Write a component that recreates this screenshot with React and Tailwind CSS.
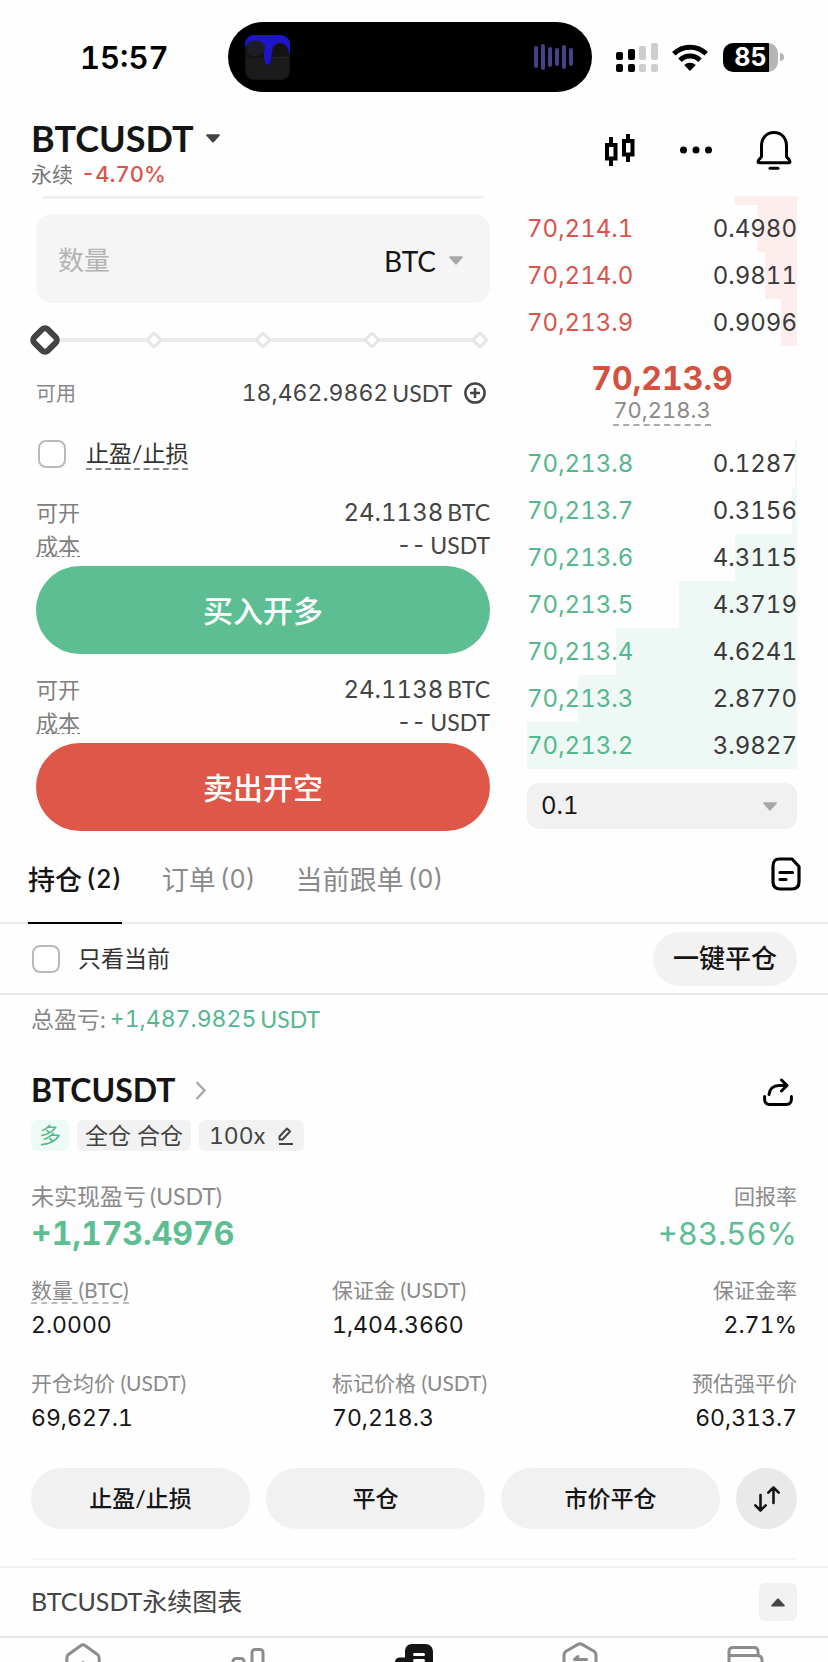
import { useState } from "react";

const asks = [
  { price: "70,214.1", amount: "0.4980", depth: 15 },
  { price: "70,214.0", amount: "0.9811", depth: 12 },
  { price: "70,213.9", amount: "0.9096", depth: 6 },
];

const bids = [
  { price: "70,213.8", amount: "0.1287", depth: 1 },
  { price: "70,213.7", amount: "0.3156", depth: 2 },
  { price: "70,213.6", amount: "4.3115", depth: 23 },
  { price: "70,213.5", amount: "4.3719", depth: 44 },
  { price: "70,213.4", amount: "4.6241", depth: 67 },
  { price: "70,213.3", amount: "2.8770", depth: 81 },
  { price: "70,213.2", amount: "3.9827", depth: 100 },
];

const stats = [
  { label: "数量", unit: "(BTC)", value: "2.0000", dashed: true },
  { label: "保证金", unit: "(USDT)", value: "1,404.3660" },
  { label: "保证金率", value: "2.71%", right: true },
  { label: "开仓均价", unit: "(USDT)", value: "69,627.1" },
  { label: "标记价格", unit: "(USDT)", value: "70,218.3" },
  { label: "预估强平价", value: "60,313.7", right: true },
];

const tabs = [
  { name: "持仓", count: 2 },
  { name: "订单", count: 0 },
  { name: "当前跟单", count: 0 },
];

function Num({ className = "", children }) {
  return <span className={`font-[Inter,sans-serif] tabular-nums ${className}`}>{children}</span>;
}

function Caret({ className = "", up = false }) {
  return (
    <svg className={className} width="14" height="9" viewBox="0 0 14 9" fill="currentColor" aria-hidden="true">
      {up ? (
        <path d="M7 .5c.4 0 .7.1 1 .5l5.500 6c.7.8.3 1.600-.8 1.600H1.300C.2 8.600-.2 7.800.5 7L6 1c.3-.4.6-.5 1-.5z" />
      ) : (
        <path d="M7 8.600c-.4 0-.7-.1-1-.5L.4 1.700C-.2 1 .1.300 1.100.300h11.800c1 0 1.300.7.7 1.400L8 8.100c-.3.4-.6.5-1 .5z" />
      )}
    </svg>
  );
}

function StatusBar() {
  return (
    <div className="flex h-[114px] items-center pl-20 pr-11">
      <div className="w-[148px] text-[31px] font-semibold leading-none text-black">
        <Num>15:57</Num>
      </div>
      <div className="flex h-[70px] w-[364px] items-center justify-between rounded-full bg-black pl-[17px] pr-[18px]">
        <svg width="45" height="45" viewBox="0 0 45 45" aria-hidden="true">
          <rect x="0" y="0" width="45" height="45" rx="9" fill="#141414" />
          <path d="M0 14V9a9 9 0 0 1 9-9h27a9 9 0 0 1 9 9v13c-1-8-4-14-10-14-5 0-8 4-8.500 12 0 5-1 10-4 10s-3.500-5-3.500-9c0-9-3-14-9-14-7 0-10 4-10 8z" fill="#1d16c8" />
          <path d="M2 14c0-5 3-8.500 8.500-8.500S20 9 20 13c0 5-5 8-9 8-5 1-9-1-9-7z" fill="#1d1d26" />
          <path d="M27 23l16-1" stroke="#2c2c2e" strokeWidth="1" />
          <path d="M1 23h18c1 4 2 7 4 7s3-3 4-7h17v13a8 8 0 0 1-8 8H9a8 8 0 0 1-8-8z" fill="#1b1b1c" />
        </svg>
        <svg width="41" height="28" viewBox="0 0 41 28" stroke="#454289" strokeWidth="4" strokeLinecap="round" aria-hidden="true">
          <path d="M3 5v18M10 3v22M17 6v16M24 7v14M31 4v20M38 7v14" />
        </svg>
      </div>
      <div className="flex flex-1 items-center justify-end">
        <svg width="42" height="30" viewBox="0 0 42 30" aria-hidden="true">
          <g fill="#000">
            <rect x="0" y="10" width="7" height="8" rx="2" />
            <rect x="12" y="7" width="7" height="11" rx="2" />
            <rect x="0" y="22" width="7" height="8" rx="2" />
            <rect x="12" y="22" width="7" height="8" rx="2" />
          </g>
          <g fill="#cdcdcd">
            <rect x="23" y="4" width="7" height="14" rx="2" />
            <rect x="35" y="1" width="7" height="17" rx="2" />
            <rect x="23" y="22" width="7" height="8" rx="2" />
            <rect x="35" y="22" width="7" height="8" rx="2" />
          </g>
        </svg>
        <svg className="ml-[14px]" width="36" height="27" viewBox="0 0 36 27" fill="none" stroke="#000" strokeWidth="5" aria-hidden="true">
          <path d="M1.800 9.800a23 23 0 0 1 32.400 0" />
          <path d="M8 16.200a14.200 14.200 0 0 1 20 0" />
          <path d="M18 27l-5.800-5.900a8.300 8.300 0 0 1 11.600 0z" fill="#000" stroke="none" />
        </svg>
        <div className="ml-[15px] flex h-[29px] w-[55px] items-center justify-center rounded-[10px] bg-linear-to-r from-black from-83% to-[#b5b5b5] to-83% text-[25px] font-bold leading-none text-white">
          <Num>85</Num>
        </div>
        <div className="ml-[2px] h-2 w-1 rounded-r-full bg-[#b5b5b5]" />
      </div>
    </div>
  );
}

function Header() {
  return (
    <header className="flex h-[82px] items-start justify-between pl-[31px] pr-9">
      <div>
        <button type="button" className="flex items-center gap-3 text-[36px] font-bold leading-[48px] text-[#151515]">
          BTCUSDT
          <Caret className="text-[#444]" />
        </button>
        <div className="flex items-center gap-2 text-[21px] leading-6 text-[#777]">
          永续
          <Num className="text-[22px] font-medium text-[#d9534a]">-4.70%</Num>
        </div>
      </div>
      <div className="flex items-center gap-11 pt-4 text-black">
        <button type="button" aria-label="K线">
          <svg width="33" height="34" viewBox="0 0 33 34" fill="none" stroke="currentColor" strokeWidth="4">
            <path d="M8 4v7M8 26v7M25 1v6M25 22v7" />
            <rect x="4" y="12" width="8.500" height="13.500" />
            <rect x="21" y="8" width="8.500" height="13.500" />
          </svg>
        </button>
        <button type="button" aria-label="更多">
          <svg width="32" height="8" viewBox="0 0 32 8" fill="currentColor">
            <circle cx="3.500" cy="4" r="3.500" />
            <circle cx="16" cy="4" r="3.500" />
            <circle cx="28.500" cy="4" r="3.500" />
          </svg>
        </button>
        <button type="button" aria-label="提醒">
          <svg width="36" height="40" viewBox="0 0 36 40" fill="none" stroke="currentColor" strokeWidth="3" strokeLinejoin="round" strokeLinecap="round">
            <path d="M5.500 16C5.500 8 10.500 2.500 18 2.500S30.500 8 30.500 16v10.500c0 1.500 3.500 2.500 3.500 5 0 .8-.5 1.200-1.300 1.200H3.300c-.8 0-1.300-.4-1.300-1.200 0-2.500 3.500-3.500 3.500-5z" />
            <path d="M14 38.200h8" />
          </svg>
        </button>
      </div>
    </header>
  );
}

function AmountSlider() {
  const [value, setValue] = useState(0);
  return (
    <div className="relative -ml-2 mt-[21px] h-8">
      <svg className="h-8 w-full" viewBox="0 0 462 32" fill="#fff" aria-hidden="true">
        <path d="M30 16h422" stroke="#ebebeb" strokeWidth="4" />
        {[126, 235, 344, 452].map((x) => (
          <rect key={x} x={x - 5} y="11" width="10" height="10" rx="2" transform={`rotate(45 ${x} 16)`} stroke="#e6e6e6" strokeWidth="3" />
        ))}
        <rect x="7.500" y="6.500" width="19" height="19" rx="4" transform="rotate(45 17 16)" stroke="#444" strokeWidth="6" />
      </svg>
      <input
        type="range"
        min="0"
        max="100"
        step="25"
        value={value}
        onChange={(e) => setValue(Number(e.target.value))}
        aria-label="仓位比例"
        className="absolute inset-0 h-full w-full cursor-pointer opacity-0"
      />
    </div>
  );
}

function Checkbox({ id }) {
  return (
    <input
      id={id}
      type="checkbox"
      className="size-7 appearance-none rounded-lg border-2 border-[#b9b9b9] bg-white checked:bg-[#444]"
    />
  );
}

function OrderSide({ label, color }) {
  return (
    <div>
      <dl className="text-[23px] leading-[33px] text-[#444]">
        <div className="flex justify-between">
          <dt className="text-[22px] text-[#808080]">可开</dt>
          <dd className="flex gap-1">
            <Num className="text-[24px]">24.1138</Num>
            <span>BTC</span>
          </dd>
        </div>
        <div className="flex justify-between">
          <dt className="text-[22px] text-[#808080] underline decoration-dashed decoration-1 underline-offset-2">成本</dt>
          <dd className="flex gap-1">
            <Num>--</Num>
            <span>USDT</span>
          </dd>
        </div>
      </dl>
      <button type="button" className={`mt-1 h-[88px] w-full rounded-full text-[30px] font-medium text-white ${color}`}>
        {label}
      </button>
    </div>
  );
}

function OrderForm() {
  return (
    <form className="w-[454px] shrink grow-0" onSubmit={(e) => e.preventDefault()}>
      <div className="mx-1.5 h-[3px] bg-[#f0f0f0]" />
      <div className="mt-[15px] flex h-[89px] items-center justify-between rounded-2xl bg-[#f5f5f5] px-[22px] pt-1">
        <input
          type="text"
          aria-label="数量"
          placeholder="数量"
          className="w-40 bg-transparent text-[26px] text-[#151515] outline-none placeholder:text-[#b3b3b3]"
        />
        <div className="relative flex items-center">
          <select aria-label="单位" className="w-[84px] appearance-none bg-transparent text-[28px] text-[#151515] outline-none">
            <option>BTC</option>
            <option>USDT</option>
          </select>
          <Caret className="pointer-events-none absolute right-[5px] text-[#a8a8a8]" />
        </div>
      </div>

      <AmountSlider />

      <div className="mt-[21px] flex h-8 items-center text-[23px] text-[#444]">
        <span className="mr-auto text-[20px] text-[#888]">可用</span>
        <span className="flex gap-1">
          <Num>18,462.9862</Num>
          <span>USDT</span>
        </span>
        <button type="button" aria-label="划转" className="ml-3 mr-1">
          <svg width="22" height="22" viewBox="0 0 22 22" fill="none" stroke="currentColor" strokeWidth="2.500">
            <circle cx="11" cy="11" r="9.600" />
            <path d="M11 6v10M6 11h10" />
          </svg>
        </button>
      </div>

      <div className="mt-[29px] flex items-center gap-5 pl-[2px]">
        <Checkbox id="tpsl" />
        <label htmlFor="tpsl" className="border-b-2 border-dashed border-[#888] text-[23px] leading-[30px] text-[#333]">
          止盈/止损
        </label>
      </div>

      <div className="mt-[26px] flex flex-col gap-[19px]">
        <OrderSide label="买入开多" color="bg-[#5dbe93]" />
        <OrderSide label="卖出开空" color="bg-[#df5748]" />
      </div>
    </form>
  );
}

function BookTable({ rows, label, priceColor, barColor }) {
  return (
    <table aria-label={label} className="w-full font-[Inter,sans-serif] text-[24px] leading-none tabular-nums">
      <tbody>
        {rows.map((row) => (
          <tr
            key={row.price}
            className="h-[47px]"
            style={{ backgroundImage: `linear-gradient(to left, ${barColor} ${row.depth}%, transparent ${row.depth}%)` }}
          >
            <td className={priceColor}>{row.price}</td>
            <td className="text-right text-[#3a3a3a]">{row.amount}</td>
          </tr>
        ))}
      </tbody>
    </table>
  );
}

function OrderBook() {
  return (
    <section className="w-[270px] shrink-0">
      <div className="ml-auto h-[9px] w-[62px] bg-[#fdeeed]" />
      <BookTable rows={asks} label="卖盘" priceColor="text-[#d9534a]" barColor="#fdeeed" />
      <div className="flex h-[94px] flex-col items-center pt-[15px]">
        <Num className="text-[32px] font-bold leading-9 text-[#d5513f]">70,213.9</Num>
        <Num className="border-b-2 border-dashed border-[#aaa] text-[22px] leading-[27px] text-[#8a8a8a]">70,218.3</Num>
      </div>
      <BookTable rows={bids} label="买盘" priceColor="text-[#55b78d]" barColor="#eef8f5" />
      <div className="relative mt-[14px] flex items-center">
        <select
          aria-label="价格精度"
          className="h-[46px] w-full appearance-none rounded-xl bg-[#f1f1f1] px-[14px] font-[Inter,sans-serif] text-[24px] tabular-nums text-[#151515] outline-none"
        >
          <option>0.1</option>
          <option>1</option>
          <option>10</option>
        </select>
        <Caret className="pointer-events-none absolute right-5 text-[#a8a8a8]" />
      </div>
    </section>
  );
}

function PositionTabs() {
  const [active, setActive] = useState("持仓");
  return (
    <div className="mt-3 flex items-start justify-between border-b-2 border-[#ebebeb] pl-7 pr-[27px]">
      <div className="flex gap-10" role="tablist">
        {tabs.map((tab) => (
          <button
            key={tab.name}
            type="button"
            role="tab"
            aria-selected={active === tab.name}
            onClick={() => setActive(tab.name)}
            className={`-mb-0.5 flex h-[81px] items-center gap-1 border-b-2 pb-[5px] text-[27px] ${
              active === tab.name ? "border-black font-medium text-[#151515]" : "border-transparent text-[#8a8a8a]"
            }`}
          >
            {tab.name}
            <Num className="text-[25px]">({tab.count})</Num>
          </button>
        ))}
      </div>
      <button type="button" aria-label="历史记录" className="mt-[14px] text-black">
        <svg width="30" height="34" viewBox="0 0 30 34" fill="none" stroke="currentColor" strokeWidth="3.200" strokeLinecap="round" strokeLinejoin="round">
          <path d="M8 2h13l7 7.500V25c0 4.500-2.500 7-7 7H9c-4.500 0-7-2.500-7-7V9c0-4.500 2.500-7 6-7z" />
          <path d="M9 15.500h12.500M9 22.500h6" />
        </svg>
      </button>
    </div>
  );
}

function Position() {
  return (
    <section className="px-[31px]">
      <div className="mt-2 flex h-8 items-center text-[23px] text-[#888]">
        总盈亏:
        <span className="ml-1 flex gap-1 text-[#55b78d]">
          <Num>+1,487.9825</Num>
          <span>USDT</span>
        </span>
      </div>

      <div className="mt-[35px] flex h-10 items-center justify-between">
        <a href="#btcusdt" className="flex items-center gap-5 text-[32px] font-bold text-[#151515]">
          BTCUSDT
          <svg width="11" height="19" viewBox="0 0 11 19" fill="none" stroke="#aaa" strokeWidth="2.500" aria-hidden="true">
            <path d="M1.500 1l8 8.500-8 8.500" />
          </svg>
        </a>
        <button type="button" aria-label="分享" className="mr-1 mt-1 text-black">
          <svg width="30" height="28" viewBox="0 0 30 28" fill="none" stroke="currentColor" strokeWidth="3" strokeLinecap="round" strokeLinejoin="round">
            <path d="M6 16.500C6.500 11 10.500 7.500 16 7.500h7.500" />
            <path d="M18.500 2l5.500 5.500-5.500 5.500" />
            <path d="M1.600 18.500v3c0 3 2 4.900 5 4.900h16.800c3 0 5-1.900 5-4.900v-3" />
          </svg>
        </button>
      </div>

      <div className="mt-[10px] flex gap-2 text-[23px] leading-[30px] text-[#444]">
        <span className="rounded-md bg-[#eefaf5] px-2 text-[22px] text-[#55b78d]">多</span>
        <span className="rounded-md bg-[#f2f2f2] px-2">全仓 合仓</span>
        <button type="button" className="flex items-center gap-3 rounded-md bg-[#f2f2f2] px-[10px]">
          <span>
            <Num>100</Num>x
          </span>
          <svg width="17" height="18" viewBox="0 0 17 18" fill="none" stroke="currentColor" strokeWidth="2" strokeLinejoin="round" aria-label="调整杠杆">
            <path d="M2.500 12.500V9.500L10 1.500l3 3-7.500 8z" />
            <path d="M2 17h14" />
          </svg>
        </button>
      </div>

      <dl className="mt-[31px] flex justify-between">
        <div>
          <dt className="flex gap-1 text-[23px] leading-7 text-[#8a8a8a]">
            未实现盈亏
            <span>(USDT)</span>
          </dt>
          <dd className="mt-[3px] text-[32px] font-bold leading-10 text-[#5dbe93]">
            <Num>+1,173.4976</Num>
          </dd>
        </div>
        <div className="text-right">
          <dt className="text-[21px] leading-7 text-[#8a8a8a]">回报率</dt>
          <dd className="mt-[3px] text-[31px] leading-10 text-[#5dbe93]">
            <Num>+83.56%</Num>
          </dd>
        </div>
      </dl>

      <dl className="mt-[23px] grid grid-cols-[301fr_233fr_232fr] gap-y-[29px]">
        {stats.map((s) => (
          <div key={s.label} className={s.right ? "text-right" : ""}>
            <dt className="h-7 text-[21px] leading-[26px] text-[#8a8a8a]">
              <span className={s.dashed ? "inline-block border-b-2 border-dashed border-[#bbb] leading-6" : ""}>
                {s.label} {s.unit}
              </span>
            </dt>
            <dd className="mt-[3px] text-[23px] leading-8 text-[#151515]">
              <Num>{s.value}</Num>
            </dd>
          </div>
        ))}
      </dl>

      <div className="mt-[34px] flex gap-4 border-b-2 border-[#f6f6f6] pb-[29px] text-[23px] font-medium text-[#151515]">
        <button type="button" className="h-[61px] flex-1 rounded-full bg-[#f1f1f1]">止盈/止损</button>
        <button type="button" className="h-[61px] flex-1 rounded-full bg-[#f1f1f1]">平仓</button>
        <button type="button" className="h-[61px] flex-1 rounded-full bg-[#f1f1f1]">市价平仓</button>
        <button type="button" aria-label="反手" className="flex size-[61px] items-center justify-center rounded-full bg-[#e9e9e9]">
          <svg width="26" height="26" viewBox="0 0 26 26" fill="none" stroke="currentColor" strokeWidth="2.600" strokeLinecap="round" strokeLinejoin="round">
            <path d="M6.500 9v15.500M1.300 19.300l5.200 5.200 5.200-5.200" />
            <path d="M19.500 17V1.500M14.300 6.700l5.200-5.200 5.200 5.200" />
          </svg>
        </button>
      </div>
    </section>
  );
}

function BottomNav() {
  const item = "flex flex-1 justify-center";
  return (
    <nav className="flex h-[26px] overflow-hidden border-t-2 border-[#e6e6e6] text-[#8c8c8c]">
      <a href="#home" aria-label="首页" className={item}>
        <svg width="36" height="40" viewBox="0 0 36 40" fill="none" stroke="currentColor" strokeWidth="3" strokeLinejoin="round">
          <path d="M1.800 20c0-1.500.5-2.600 1.700-3.500L16 7.500c1.300-1 2.700-1 4 0l12.500 9c1.200.9 1.700 2 1.700 3.500v12c0 4-2 6-6 6H8c-4 0-6-2-6-6z" />
          <path d="M12 30l6-5.500 6 5.500" />
        </svg>
      </a>
      <a href="#market" aria-label="行情" className={item}>
        <svg width="36" height="44" viewBox="0 0 36 44" fill="none" stroke="currentColor" strokeWidth="3">
          <rect x="3" y="20.500" width="11" height="22" rx="3" />
          <rect x="22" y="11.500" width="11" height="31" rx="3" />
        </svg>
      </a>
      <a href="#futures" aria-label="合约" aria-current="page" className={`${item} text-[#151515]`}>
        <svg width="38" height="44" viewBox="0 0 38 44" fill="currentColor">
          <path d="M10 14c0-5 2.500-8 7-8h13c5 0 8 3 8 8v25H4c-2.500 0-4-1.500-4-4V24c0-3 2-4.500 5-4.500h5z" />
          <path d="M19.500 16.500h9M19.500 22.500h9" stroke="#fff" strokeWidth="3" strokeLinecap="round" />
        </svg>
      </a>
      <a href="#copy" aria-label="跟单" className={item}>
        <svg width="36" height="44" viewBox="0 0 36 44" fill="none" stroke="currentColor" strokeWidth="3" strokeLinejoin="round" strokeLinecap="round">
          <path d="M2 17c0-1.800.6-2.900 2-3.800l12-6.800c1.400-.8 2.600-.8 4 0l12 6.800c1.400.9 2 2 2 3.800v15L18 42 2 32z" />
          <path d="M24.500 21.500h-12l3.500-3" />
        </svg>
      </a>
      <a href="#assets" aria-label="资产" className={item}>
        <svg width="38" height="44" viewBox="0 0 38 44" fill="none" stroke="currentColor" strokeWidth="3">
          <path d="M3 38V13.500C3 11 4.500 9.500 7 9.500h21c2.500 0 4 1.500 4 4V17" />
          <path d="M3 17.500h28c3 0 5 1.500 5 4.500v16" />
        </svg>
      </a>
    </nav>
  );
}

export default function App() {
  return (
    <div className="min-h-screen bg-[#fefefe] font-[Lato,'Noto_Sans_CJK_SC',sans-serif]">
      <StatusBar />
      <Header />
      <main>
        <div className="flex justify-between pl-9 pr-[31px]">
          <OrderForm />
          <OrderBook />
        </div>
        <PositionTabs />
        <div className="flex h-[71px] items-center border-b-2 border-[#ebebeb] pl-8 pr-[31px]">
          <Checkbox id="current-only" />
          <label htmlFor="current-only" className="ml-[18px] text-[23px] text-[#333]">
            只看当前
          </label>
          <button type="button" className="ml-auto h-[54px] rounded-full bg-[#f2f2f2] px-5 text-[26px] font-medium text-[#151515]">
            一键平仓
          </button>
        </div>
        <Position />
      </main>
      <div className="mt-[6px] flex h-[70px] items-center justify-between border-t-2 border-[#f1f1f1] px-[31px] text-[25px] text-[#444]">
        BTCUSDT永续图表
        <button type="button" aria-label="展开图表" className="flex size-[38px] items-center justify-center rounded-md bg-[#f2f2f2]">
          <Caret up />
        </button>
      </div>
      <BottomNav />
    </div>
  );
}
